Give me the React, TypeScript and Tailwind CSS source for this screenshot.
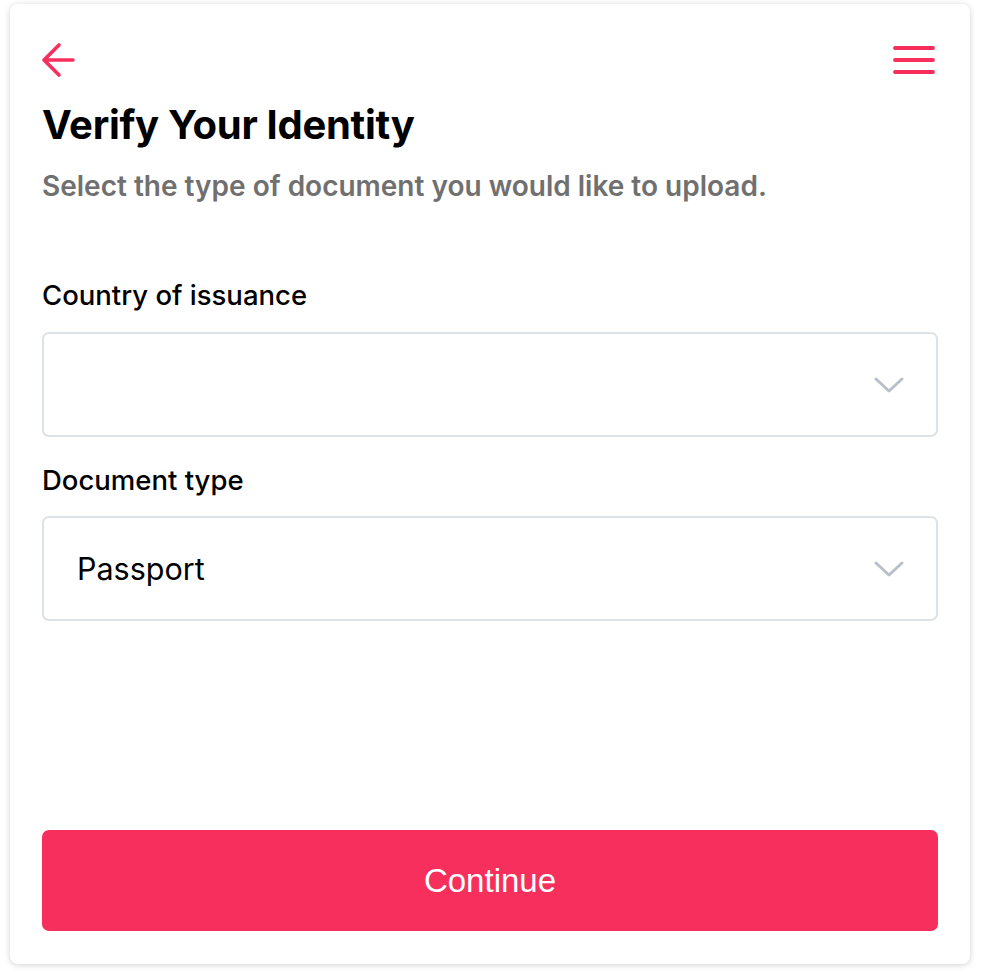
import React from "react";

function Chevron() {
  return (
    <svg width="30" height="16" viewBox="0 0 30 16" fill="none">
      <path d="M2 2 L15 14 L28 2" stroke="#b9c0ca" strokeWidth="3" strokeLinecap="round" strokeLinejoin="round" />
    </svg>
  );
}

export default function App() {
  return (
    <div className="min-h-screen bg-white" style={{ fontFamily: "Inter, 'Noto Sans', sans-serif" }}>
      <div className="pt-[4px] pl-[10px]">
        <div className="w-[960px] h-[960px] bg-white rounded-[8px] shadow-[0_1px_6px_rgba(0,0,0,0.18)] flex flex-col px-[32px] pt-[40px] pb-[33px]">
          <div className="flex items-center justify-between h-[32px]">
            <svg width="36" height="36" viewBox="0 0 36 36" fill="none" className="-ml-[2px]">
              <path d="M33 18 H4 M19 3 L4 18 L19 33" stroke="#f72f5c" strokeWidth="3.6" strokeLinecap="round" strokeLinejoin="round" />
            </svg>
            <svg width="44" height="30" viewBox="0 0 44 30" fill="none" className="mr-[2px]">
              <path d="M3 3 H41 M3 15 H41 M3 27 H41" stroke="#f72f5c" strokeWidth="3.8" strokeLinecap="round" />
            </svg>
          </div>
          <h1 className="mt-[25px] text-[40px] leading-[48px] font-bold text-black tracking-[-0.3px]">Verify Your Identity</h1>
          <p className="mt-[19px] text-[28px] leading-[36px] font-semibold text-[#707070]">
            Select the type of document you would like to upload.
          </p>
          <label className="mt-[74px] text-[27.5px] leading-[34px] font-medium text-black">Country of issuance</label>
          <div className="mt-[20px] h-[105px] border-2 border-[#dde2e7] rounded-[7px] flex items-center justify-end pr-[32px]">
            <Chevron />
          </div>
          <label className="mt-[26px] text-[27.5px] leading-[34px] font-medium text-black">Document type</label>
          <div className="mt-[19px] h-[105px] border-2 border-[#dde2e7] rounded-[7px] flex items-center justify-between pl-[33px] pr-[32px]">
            <span className="text-[30.5px] text-black">Passport</span>
            <Chevron />
          </div>
          <div className="flex-1" />
          <button className="h-[101px] w-full rounded-[7px] bg-[#f72f5c] text-white text-[33px]" style={{ fontFamily: "'Liberation Sans', Arial, sans-serif" }}>
            Continue
          </button>
        </div>
      </div>
    </div>
  );
}
